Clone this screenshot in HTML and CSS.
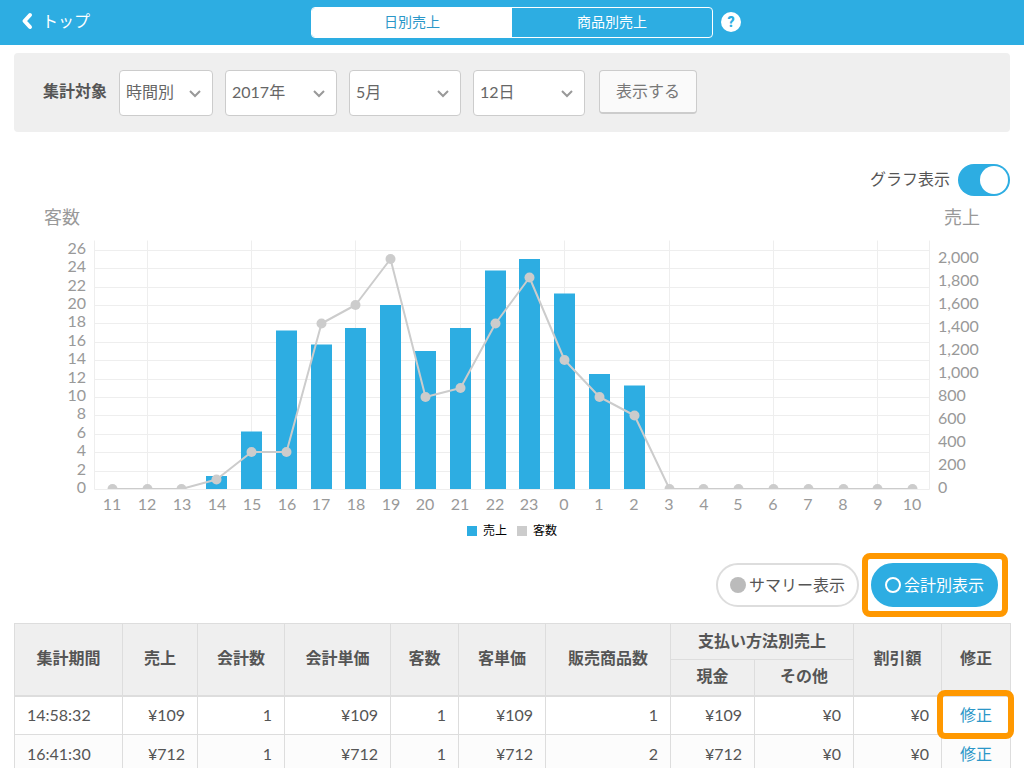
FILE: index.html
```
<!DOCTYPE html>
<html lang="ja">
<head>
<meta charset="utf-8">
<meta name="viewport" content="width=device-width, initial-scale=1">
<title>日別売上</title>
<link rel="stylesheet" href="styles.css">
</head>
<body>
<div class="app">
  <header class="topbar">
    <a class="back" href="#">
      <svg class="back-icon" viewBox="0 0 12 18" aria-hidden="true"><path d="M9 3 3.500 9 9 15"/></svg>
      <span>トップ</span>
    </a>
    <nav class="tabs">
      <button class="tab tab-active" type="button">日別売上</button>
      <button class="tab" type="button">商品別売上</button>
    </nav>
    <button class="help" type="button" aria-label="ヘルプ">?</button>
  </header>

  <main class="content">
    <form class="filter">
      <label class="filter-label" for="unit">集計対象</label>
      <select class="select select-unit" id="unit"><option>時間別</option></select>
      <select class="select" aria-label="年"><option>2017年</option></select>
      <select class="select" aria-label="月"><option>5月</option></select>
      <select class="select" aria-label="日"><option>12日</option></select>
      <button class="submit" type="button">表示する</button>
    </form>

    <div class="graph-toggle">
      <label for="graph">グラフ表示</label>
      <input class="switch" id="graph" type="checkbox" role="switch" checked>
    </div>

    <section class="chart" aria-label="売上と客数">
      <svg class="plot" viewBox="14 200 996 316">
        <defs><clipPath id="plot-area"><rect x="94" y="240" width="836" height="249"/></clipPath></defs>
        <g class="axis-title">
          <text x="44" y="224">客数</text>
          <text x="944" y="224">売上</text>
        </g>
        <g class="grid" transform="translate(.5 .5)">
          <path d="M94 250H929M94 268H929M94 287H929M94 305H929M94 323H929M94 342H929M94 360H929M94 379H929M94 397H929M94 415H929M94 434H929M94 452H929M94 471H929M94 489H929"/>
          <path d="M94 240V489M147 240V489M251 240V489M355 240V489M460 240V489M564 240V489M669 240V489M773 240V489M877 240V489M929 240V489"/>
        </g>
        <g class="bars">
          <rect x="206" y="476" width="21" height="13"/>
          <rect x="241" y="431.500" width="21" height="57.500"/>
          <rect x="276" y="330.500" width="21" height="158.500"/>
          <rect x="311" y="344.500" width="21" height="144.500"/>
          <rect x="345" y="328" width="21" height="161"/>
          <rect x="380" y="305" width="21" height="184"/>
          <rect x="415" y="351" width="21" height="138"/>
          <rect x="450" y="328" width="21" height="161"/>
          <rect x="485" y="270.500" width="21" height="218.500"/>
          <rect x="519" y="259" width="21" height="230"/>
          <rect x="554" y="293.500" width="21" height="195.500"/>
          <rect x="589" y="374" width="21" height="115"/>
          <rect x="624" y="385.500" width="21" height="103.500"/>
        </g>
        <g clip-path="url(#plot-area)">
          <polyline class="line" points="112.500,489 147.500,489 181.500,489 216.500,479.500 251.500,452 286.500,452 321.500,323.500 355.500,305 390.500,259 425.500,397 460.500,388 495.500,323.500 529.500,277.500 564.500,360 599.500,397 634.500,415.500 669.500,489 912.500,489"/>
          <g class="dots">
            <circle cx="112.500" cy="489" r="5"/><circle cx="147.500" cy="489" r="5"/><circle cx="181.500" cy="489" r="5"/>
            <circle cx="216.500" cy="479.500" r="5"/><circle cx="251.500" cy="452" r="5"/><circle cx="286.500" cy="452" r="5"/>
            <circle cx="321.500" cy="323.500" r="5"/><circle cx="355.500" cy="305" r="5"/><circle cx="390.500" cy="259" r="5"/>
            <circle cx="425.500" cy="397" r="5"/><circle cx="460.500" cy="388" r="5"/><circle cx="495.500" cy="323.500" r="5"/>
            <circle cx="529.500" cy="277.500" r="5"/><circle cx="564.500" cy="360" r="5"/><circle cx="599.500" cy="397" r="5"/>
            <circle cx="634.500" cy="415.500" r="5"/><circle cx="669.500" cy="489" r="5"/><circle cx="703.500" cy="489" r="5"/>
            <circle cx="738.500" cy="489" r="5"/><circle cx="773.500" cy="489" r="5"/><circle cx="808.500" cy="489" r="5"/>
            <circle cx="843.500" cy="489" r="5"/><circle cx="877.500" cy="489" r="5"/><circle cx="912.500" cy="489" r="5"/>
          </g>
        </g>
        <g class="tick tick-left">
          <text x="86" y="254">26</text><text x="86" y="272">24</text><text x="86" y="291">22</text><text x="86" y="309">20</text>
          <text x="86" y="327">18</text><text x="86" y="346">16</text><text x="86" y="364">14</text><text x="86" y="383">12</text>
          <text x="86" y="401">10</text><text x="86" y="419">8</text><text x="86" y="438">6</text><text x="86" y="456">4</text>
          <text x="86" y="475">2</text><text x="86" y="493">0</text>
        </g>
        <g class="tick">
          <text x="938" y="263">2,000</text><text x="938" y="286">1,800</text><text x="938" y="309">1,600</text><text x="938" y="332">1,400</text>
          <text x="938" y="355">1,200</text><text x="938" y="378">1,000</text><text x="938" y="401">800</text><text x="938" y="424">600</text>
          <text x="938" y="447">400</text><text x="938" y="470">200</text><text x="938" y="493">0</text>
        </g>
        <g class="tick tick-bottom">
          <text x="112" y="510">11</text><text x="147" y="510">12</text><text x="182" y="510">13</text><text x="217" y="510">14</text>
          <text x="252" y="510">15</text><text x="287" y="510">16</text><text x="321" y="510">17</text><text x="356" y="510">18</text>
          <text x="391" y="510">19</text><text x="425" y="510">20</text><text x="460" y="510">21</text><text x="495" y="510">22</text>
          <text x="529" y="510">23</text><text x="564" y="510">0</text><text x="599" y="510">1</text><text x="634" y="510">2</text>
          <text x="669" y="510">3</text><text x="704" y="510">4</text><text x="738" y="510">5</text><text x="773" y="510">6</text>
          <text x="808" y="510">7</text><text x="843" y="510">8</text><text x="878" y="510">9</text><text x="912" y="510">10</text>
        </g>
      </svg>
      <ul class="legend">
        <li class="legend-item"><span class="swatch swatch-sales"></span>売上</li>
        <li class="legend-item"><span class="swatch swatch-guests"></span>客数</li>
      </ul>
    </section>

    <div class="views">
      <button class="pill" type="button"><span class="dot"></span>サマリー表示</button>
      <div class="callout">
        <button class="pill pill-active" type="button"><span class="dot dot-ring"></span>会計別表示</button>
      </div>
    </div>

    <table class="report">
      <colgroup>
        <col class="c-time"><col class="c-sales"><col class="c-count"><col class="c-unit"><col class="c-guests"><col class="c-count"><col class="c-items"><col class="c-cash"><col class="c-other"><col class="c-discount"><col class="c-edit">
      </colgroup>
      <thead>
        <tr>
          <th rowspan="2">集計期間</th><th rowspan="2">売上</th><th rowspan="2">会計数</th><th rowspan="2">会計単価</th><th rowspan="2">客数</th><th rowspan="2">客単価</th><th rowspan="2">販売商品数</th><th colspan="2">支払い方法別売上</th><th rowspan="2">割引額</th><th rowspan="2">修正</th>
        </tr>
        <tr><th>現金</th><th>その他</th></tr>
      </thead>
      <tbody>
        <tr><td class="time">14:58:32</td><td>¥109</td><td>1</td><td>¥109</td><td>1</td><td>¥109</td><td>1</td><td>¥109</td><td>¥0</td><td>¥0</td><td class="edit edit-marked"><a href="#">修正</a></td></tr>
        <tr><td class="time">16:41:30</td><td>¥712</td><td>1</td><td>¥712</td><td>1</td><td>¥712</td><td>2</td><td>¥712</td><td>¥0</td><td>¥0</td><td class="edit"><a href="#">修正</a></td></tr>
      </tbody>
    </table>
  </main>
</div>
</body>
</html>
```
FILE: styles.css
```
:root {
  --blue: #2dade2;
  --link: #2b97c8;
  --text: #555;
  --muted: #999;
  --panel: #efefef;
  --line: #ddd;
  --orange: #ff9800;
}

* { box-sizing: border-box; }

body {
  margin: 0;
  background: #fff;
  color: var(--text);
  font: 16px/24px Lato, "Noto Sans CJK JP", sans-serif;
}

button, select { font: inherit; color: inherit; }
button { cursor: pointer; }
a { text-decoration: none; }

.app {
  height: calc(100vh - 13px);
  overflow: hidden;
}

/* Top bar */
.topbar {
  display: grid;
  grid-template-columns: 1fr 402px 1fr;
  align-items: center;
  height: 45px;
  background: var(--blue);
  color: #fff;
}

.back {
  display: flex;
  align-items: center;
  gap: 9px;
  padding-left: 21px;
  padding-bottom: 3px;
  color: #fff;
}

.back-icon {
  width: 12px;
  height: 18px;
  fill: none;
  stroke: #fff;
  stroke-width: 4;
  stroke-linecap: round;
  stroke-linejoin: round;
}

.tabs {
  display: flex;
  height: 31px;
  border: 1px solid #fff;
  border-radius: 4px;
  overflow: hidden;
}

.tab {
  flex: 1;
  padding: 0 0 2px;
  border: 0;
  background: transparent;
  color: #fff;
  font-size: 14px;
}

.tab-active { background: #fff; color: var(--link); }

.help {
  width: 20px;
  height: 20px;
  margin-left: 8px;
  margin-bottom: 2px;
  padding: 0;
  border: 0;
  border-radius: 50%;
  background: #fff;
  color: var(--blue);
  font-family: Roboto, sans-serif;
  font-size: 14px;
  font-weight: 900;
  line-height: 20px;
}

.content { padding: 8px 14px 0; }

/* Filter */
.filter {
  display: flex;
  align-items: flex-start;
  gap: 12px;
  padding: 17px 29px 16px;
  border-radius: 4px;
  background: var(--panel);
}

.filter-label {
  font-weight: 700;
  line-height: 42px;
}

.select {
  width: 112px;
  height: 46px;
  padding: 0 6px 2px;
  border: 1px solid #ccc;
  border-radius: 4px;
  appearance: none;
  color: #666;
  background: #fff url("data:image/svg+xml,%3Csvg xmlns='http://www.w3.org/2000/svg' width='12' height='8' fill='none' stroke='%23999' stroke-width='2'%3E%3Cpath d='M1 1l5 5 5-5'/%3E%3C/svg%3E") no-repeat right 11px top 19px;
}

.select-unit { width: 94px; }

.submit {
  width: 98px;
  height: 44px;
  margin-left: 2px;
  padding: 0 0 2px;
  border: 1px solid #ccc;
  border-bottom-width: 2px;
  border-radius: 4px;
  background: #fafafa;
  color: #777;
}

/* Graph switch */
.graph-toggle {
  display: flex;
  justify-content: flex-end;
  align-items: center;
  gap: 8px;
  margin-top: 32px;
  line-height: 30px;
}

.graph-toggle label { padding-bottom: 2px; }

.switch {
  width: 52px;
  height: 32px;
  margin: 0;
  padding: 2px;
  border-radius: 16px;
  appearance: none;
  background: var(--line);
}

.switch::before {
  content: "";
  display: block;
  width: 28px;
  height: 28px;
  border-radius: 50%;
  background: #fff;
}

.switch:checked { background: var(--blue); }
.switch:checked::before { margin-left: auto; }

/* Chart */
.chart { padding-top: 4px; }
.plot { display: block; width: 100%; }
.axis-title { fill: var(--muted); font-size: 18px; }
.grid { fill: none; stroke: #eee; }
.bars { fill: var(--blue); }
.line { fill: none; stroke: #ccc; stroke-width: 2; stroke-linejoin: round; }
.dots { fill: #ccc; }
.tick { fill: var(--muted); font-size: 16px; }
.tick-left { text-anchor: end; }
.tick-bottom { text-anchor: middle; }

.legend {
  display: flex;
  justify-content: center;
  gap: 10px;
  margin: 7px 0 0;
  padding: 0;
  list-style: none;
  color: #000;
  font-size: 12px;
  line-height: 16px;
}

.legend-item { display: flex; align-items: center; gap: 6px; }
.swatch { width: 10px; height: 10px; }
.swatch-sales { background: var(--blue); }
.swatch-guests { background: #ccc; }

/* View switcher */
.views {
  display: flex;
  justify-content: flex-end;
  align-items: center;
  gap: 3px;
  margin-top: 14px;
  padding-right: 2px;
}

.callout {
  padding: 4px 4px 4px 3px;
  border: 6px solid var(--orange);
  border-radius: 8px;
}

.pill {
  display: flex;
  align-items: center;
  gap: 3px;
  height: 44px;
  padding: 0 12px;
  border: 2px solid var(--line);
  border-radius: 22px;
  background: #fff;
}

.pill-active {
  border-color: var(--blue);
  background: var(--blue);
  color: #fff;
}

.dot {
  width: 16px;
  height: 16px;
  border-radius: 50%;
  background: #bbb;
}

.dot-ring { border: 2px solid #fff; background: transparent; }

/* Report table */
.report {
  width: 100%;
  margin-top: 6px;
  table-layout: fixed;
  border-collapse: collapse;
}

.c-time { width: 108px; }
.c-sales { width: 75px; }
.c-count { width: 87px; }
.c-unit { width: 106px; }
.c-guests { width: 68px; }
.c-items { width: 125px; }
.c-cash { width: 84px; }
.c-other { width: 99px; }
.c-discount { width: 88px; }
.c-edit { width: 69px; }

.report th, .report td { border: 1px solid var(--line); }

.report th {
  height: 36px;
  padding: 0 0 2px;
  background: var(--panel);
}

.report thead { border-bottom: 2px solid var(--line); }

.report td {
  height: 39px;
  padding: 0 12px;
  text-align: right;
}

.report tbody tr:nth-child(even) { background: #fcfcfc; }
.report .time { text-align: left; }

.report .edit {
  position: relative;
  padding: 0;
  text-align: center;
}

.edit a { color: var(--link); }

.edit-marked::after {
  content: "";
  position: absolute;
  inset: -7px -4px -5px -5px;
  border: 6px solid var(--orange);
  border-radius: 8px;
  pointer-events: none;
}
```
